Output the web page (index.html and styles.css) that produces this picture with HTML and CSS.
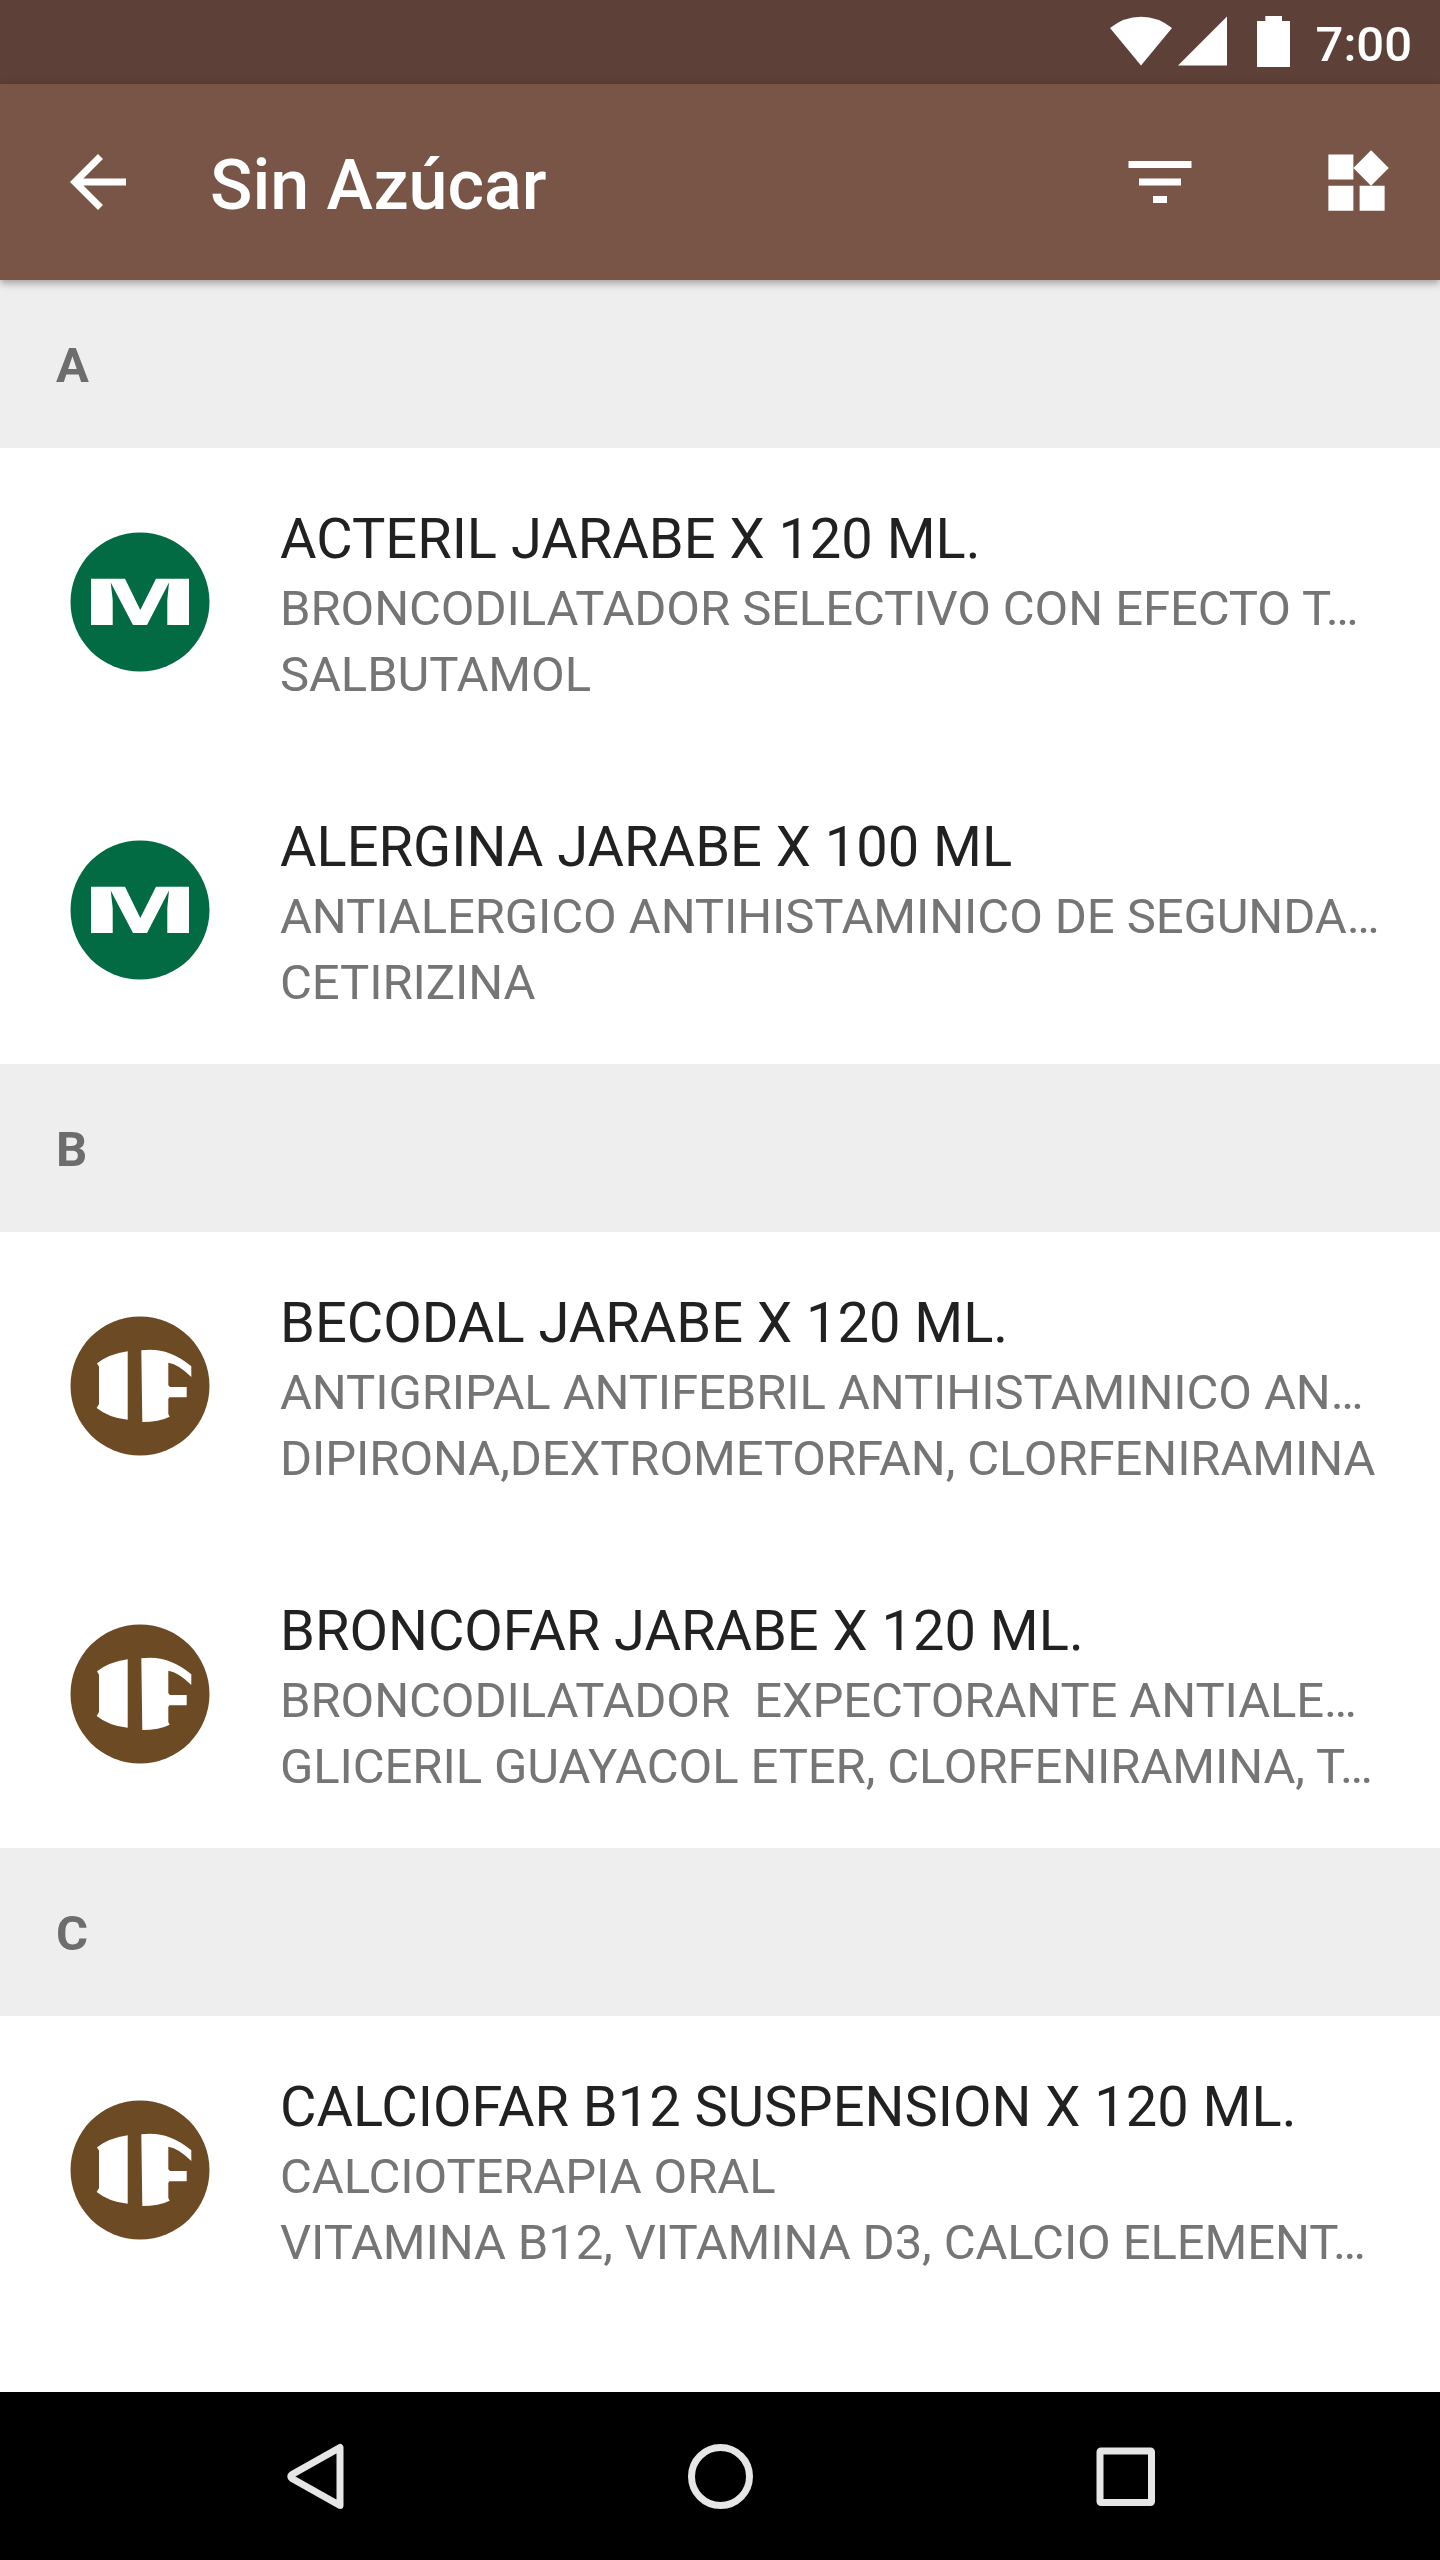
FILE: index.html
```html
<!DOCTYPE html>
<html lang="es">
  <head>
    <meta charset="utf-8">
    <title>Sin Azúcar</title>
    <link rel="stylesheet" href="styles.css">
  </head>
  <body>
    <!-- laboratory logos, used by the rows below -->
    <svg class="defs">
      <symbol id="logo-m" viewBox="0 0 140 140">
        <circle cx="70" cy="70" r="69.5" fill="#026b43"/>
        <path fill="#fff" d="M21 46.8H55L70.3 78 86 46.8H119V93H97.3V68L99 50.5 77 93H63L40.7 50.5 42.7 68V93H21z"/>
      </symbol>
      <symbol id="logo-if" viewBox="0 0 140 140">
        <circle cx="70" cy="70" r="69.5" fill="#6b4a24"/>
        <path fill="#fff" d="M57.7 35.3Q39 38 27 47.3L29 50.7V88L26.7 92Q39 102 57.7 103.7z"/>
        <path fill="#fff" d="M71.3 34.3Q98 30.5 121.3 50.3V61Q109 48.5 98.3 46.7V69.3L100 71H116.7V81.3H99.3L98.3 83V98L99.7 100.7Q89 106 72.3 106z"/>
      </symbol>
    </svg>

    <div class="status-bar">
      <svg class="wifi" viewBox="0 0 62 50"><path fill="#fff" d="M0 12Q14 .7 31 .7T62 12L31 49.5z"/></svg>
      <svg class="signal" viewBox="0 0 49 50"><path fill="#fff" d="M0 49.5H49V.5z"/></svg>
      <svg class="battery" viewBox="0 0 33 51"><path fill="#fff" d="M8.3 0H25V5H33V51H0V5H8.3z"/></svg>
      <span class="time">7:00</span>
    </div>

    <div class="toolbar">
      <svg class="back" viewBox="0 0 24 24"><path fill="#fff" d="M20 11H7.83l5.59-5.59L12 4l-8 8 8 8 1.41-1.41L7.83 13H20v-2z"/></svg>
      <h1 class="title">Sin Azúcar</h1>
      <svg class="filter" viewBox="0 0 24 24"><path fill="#fff" d="M10 18h4v-2h-4v2zM3 6v2h18V6H3zm3 7h12v-2H6v2z"/></svg>
      <svg class="widgets" viewBox="0 0 24 24"><path fill="#fff" d="M13 13v8h8v-8h-8zM3 21h8v-8H3v8zM3 3v8h8V3H3zm13.66-1.31L11 7.34 16.66 13l5.66-5.66-5.66-5.65z"/></svg>
    </div>

    <div class="list">
      <div class="section">A</div>
      <div class="row">
        <svg class="logo"><use href="#logo-m"/></svg>
        <div class="info">
          <div class="name">ACTERIL JARABE X 120 ML.</div>
          <div class="detail">BRONCODILATADOR SELECTIVO CON EFECTO T…</div>
          <div class="detail">SALBUTAMOL</div>
        </div>
      </div>
      <div class="row">
        <svg class="logo"><use href="#logo-m"/></svg>
        <div class="info">
          <div class="name">ALERGINA JARABE X 100 ML</div>
          <div class="detail">ANTIALERGICO ANTIHISTAMINICO DE SEGUNDA…</div>
          <div class="detail">CETIRIZINA</div>
        </div>
      </div>

      <div class="section">B</div>
      <div class="row">
        <svg class="logo"><use href="#logo-if"/></svg>
        <div class="info">
          <div class="name">BECODAL JARABE X 120 ML.</div>
          <div class="detail">ANTIGRIPAL ANTIFEBRIL ANTIHISTAMINICO AN…</div>
          <div class="detail">DIPIRONA,DEXTROMETORFAN, CLORFENIRAMINA</div>
        </div>
      </div>
      <div class="row">
        <svg class="logo"><use href="#logo-if"/></svg>
        <div class="info">
          <div class="name">BRONCOFAR JARABE X 120 ML.</div>
          <div class="detail">BRONCODILATADOR  EXPECTORANTE ANTIALE…</div>
          <div class="detail">GLICERIL GUAYACOL ETER, CLORFENIRAMINA, T…</div>
        </div>
      </div>

      <div class="section">C</div>
      <div class="row">
        <svg class="logo"><use href="#logo-if"/></svg>
        <div class="info">
          <div class="name">CALCIOFAR B12 SUSPENSION X 120 ML.</div>
          <div class="detail">CALCIOTERAPIA ORAL</div>
          <div class="detail">VITAMINA B12, VITAMINA D3, CALCIO ELEMENT…</div>
        </div>
      </div>
    </div>

    <div class="nav-bar">
      <svg viewBox="0 0 84 84"><path d="M67 13.500V71.500L19 44.500Q16.500 42.500 19 40.500z"/></svg>
      <svg viewBox="0 0 84 84"><circle cx="42.500" cy="42.500" r="29"/></svg>
      <svg viewBox="0 0 84 84"><rect x="17" y="17" width="51.500" height="51.500" rx="1"/></svg>
    </div>
  </body>
</html>
```

FILE: styles.css
```css
* {
  box-sizing: border-box;
}

body {
  display: flex;
  flex-direction: column;
  width: 1440px;
  height: 2560px;
  margin: 0;
  overflow: hidden;
  background: #fff;
  font-family: Roboto, sans-serif;
}

svg {
  display: block;
  flex: none;
}

.defs {
  display: none;
}

.status-bar {
  display: flex;
  flex: none;
  align-items: flex-start;
  height: 84px;
  padding: 16px 28px 0 0;
  justify-content: flex-end;
  background: #5d4037;
}

.wifi { width: 62px; height: 50px; margin-right: 6px; }
.signal { width: 49px; height: 50px; margin-right: 30px; }
.battery { width: 33px; height: 51px; margin-right: 26px; }

.time {
  color: #fff;
  font-size: 49px;
  font-weight: 500;
  line-height: 57px;
}

.toolbar {
  display: flex;
  flex: none;
  align-items: center;
  height: 196px;
  padding: 0 46px 0 56px;
  background: #795548;
  box-shadow: 0 3px 8px rgba(0, 0, 0, 0.35);
  z-index: 1;
}

.back, .filter { width: 84px; height: 84px; }
.filter { margin-right: 117px; }
.widgets { width: 75px; height: 75px; }

.title {
  flex: 1;
  margin: 0;
  padding: 6px 0 0 70px;
  color: #fff;
  font-size: 70px;
  font-weight: 500;
  line-height: 82px;
}

.list {
  flex: 1;
}

.section {
  height: 168px;
  padding: 4px 56px 0;
  background: #eee;
  color: #6d6d6d;
  font-size: 49px;
  font-weight: bold;
  line-height: 164px;
}

.row {
  display: flex;
  align-items: flex-start;
  height: 308px;
  padding: 0 56px 0 70px;
}

.logo {
  width: 140px;
  height: 140px;
  margin: 84px 70px 0 0;
}

.info {
  flex: 1;
  padding-top: 54px;
}

.name {
  color: #212121;
  font-size: 56px;
  line-height: 74px;
  white-space: pre;
}

.detail {
  color: #757575;
  font-size: 49px;
  letter-spacing: -0.1px;
  line-height: 66px;
  white-space: pre;
}

.nav-bar {
  display: grid;
  flex: none;
  grid-template-columns: 405px 405px 405px;
  justify-content: center;
  justify-items: center;
  align-items: center;
  height: 168px;
  background: #000;
}

.nav-bar svg {
  width: 84px;
  height: 84px;
  fill: none;
  stroke: #e6e6e6;
  stroke-width: 7;
  stroke-linejoin: round;
}
```
